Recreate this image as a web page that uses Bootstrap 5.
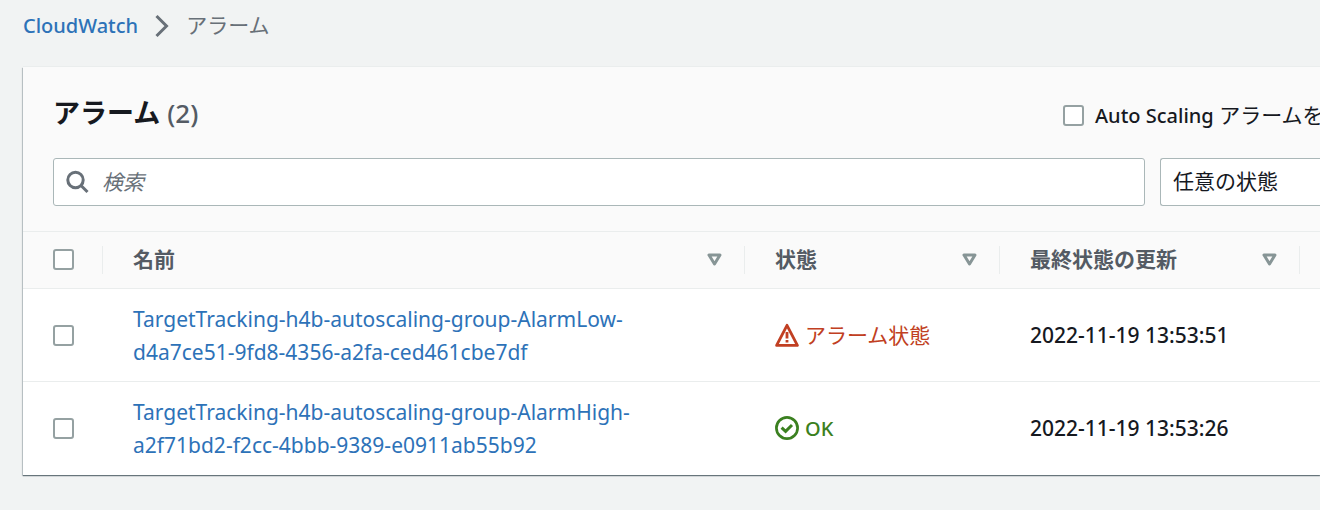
<!DOCTYPE html>
<html lang="ja">
<head>
<meta charset="utf-8">
<meta name="viewport" content="width=device-width, initial-scale=1">
<title>CloudWatch アラーム</title>
<link href="https://cdn.jsdelivr.net/npm/bootstrap@5.3.0/dist/css/bootstrap.min.css" rel="stylesheet">
<style>
  body {
    background: #f1f3f3;
    color: #16191f;
    font-family: "Noto Sans", "Noto Sans CJK JP", sans-serif;
    font-size: 21px;
    line-height: 33px;
  }
  a { color: #2d72b8; text-decoration: none; }
  a:hover { text-decoration: underline; }
  .latin { font-size: 20px; font-weight: 500; }
  .page { padding-left: 23px; }
  .crumbs { height: 67px; padding-top: 9px; }
  .crumbs .breadcrumb { gap: 17px; --bs-breadcrumb-font-size: 21px; }
  .crumb-here { color: #687078; }
  .panel {
    background: #fff;
    box-shadow: 0 1px 1px #001c2459, -1px 1px 1px #001c2426, 0 1px 1px #545b6459, 0 -1px 0 #eaeded;
  }
  .panel-top { background: #fafafa; padding: 24px 0 25px 30px; }
  .title-row { height: 43px; margin-bottom: 24px; }
  h1 { font-size: 27px; line-height: 43px; font-weight: 700; margin: 0; }
  .count { color: #545b64; font-size: 26px; font-weight: 500; }
  .scaling-option { width: 257px; gap: 11px; padding-top: 6px; }
  .form-check-input {
    width: 21px; height: 21px; margin: 0; flex: none;
    border: 2px solid #95a1a2; display: block;
    box-shadow: none;
  }
  .form-check-input[type=checkbox] { border-radius: 3px; }
  .filters { gap: 15px; }
  .search-group, .state-select {
    height: 48px; background: #fff; border: 1px solid #aab7b8; border-radius: 3px;
  }
  .search-group { padding-left: 12px; gap: 12px; }
  .search-group input { font-size: 21px; color: inherit; }
  .search-group input::placeholder { color: #687078; font-style: italic; opacity: 1; }
  .state-select {
    width: 160px; border-right: 0; border-radius: 3px 0 0 3px;
    appearance: none; padding: 0 12px 2px; font-size: 21px; color: inherit;
  }
  .alarm-table { width: 100%; table-layout: fixed; }
  .alarm-table tr { border-top: 1px solid #eaeded; }
  .alarm-table thead { background: #fafafa; color: #545b64; }
  .alarm-table th { height: 57px; padding: 0; font-weight: 700; }
  .alarm-table td { height: 93px; padding: 13px 0 13px 30px; }
  .alarm-table td.alarm-name { padding: 14px 30px 12px; }
  .alarm-table th.pick { padding-left: 30px; }
  .head-cell { height: 28px; border-right: 1px solid #eaeded; padding: 0 22px 2px 30px; }
  .pick .head-cell { padding: 0 0 2px; }
  .sort-btn { line-height: 0; }
  .col-pick { width: 80px; }
  .col-state { width: 255px; }
  .col-time { width: 300px; }
  .col-rest { width: 20px; }
  .state { gap: 6px; }
  .state-alarm { color: #c13f22; }
  .state-ok { color: #3b8020; }
  .stamp { font-weight: 500; }
</style>
</head>
<body>
<main class="page overflow-hidden pb-4">
  <nav class="crumbs" aria-label="breadcrumb">
    <ol class="breadcrumb align-items-center mb-0">
      <li><a class="latin" href="#">CloudWatch</a></li>
      <li class="d-flex" aria-hidden="true">
        <svg width="14" height="24" viewBox="0 0 14 24" fill="none" stroke="#687078" stroke-width="3"><path d="M1.5 2 11.5 12 1.5 22"/></svg>
      </li>
      <li class="crumb-here" aria-current="page">アラーム</li>
    </ol>
  </nav>

  <section class="panel">
    <div class="panel-top">
      <div class="title-row d-flex justify-content-between">
        <h1>アラーム <span class="count">(2)</span></h1>
        <div class="scaling-option d-flex align-items-center text-nowrap">
          <input class="form-check-input" type="checkbox" id="hideScaling">
          <label for="hideScaling"><span class="latin">Auto Scaling</span> アラームを</label>
        </div>
      </div>
      <div class="filters d-flex">
        <div class="search-group d-flex align-items-center flex-grow-1">
          <svg width="24" height="24" viewBox="0 0 24 24" fill="none" stroke="#687078" stroke-width="3"><circle cx="9.5" cy="10" r="7.7"/><path d="M15 15.5 21.5 22"/></svg>
          <input class="border-0 bg-transparent p-0 flex-grow-1" type="search" placeholder="検索" aria-label="検索">
        </div>
        <select class="state-select" aria-label="状態"><option>任意の状態</option></select>
      </div>
    </div>

    <table class="alarm-table">
      <colgroup><col class="col-pick"><col><col class="col-state"><col class="col-time"><col class="col-rest"></colgroup>
      <thead>
        <tr>
          <th class="pick"><div class="head-cell d-flex align-items-center"><input class="form-check-input" type="checkbox" aria-label="すべて選択"></div></th>
          <th><div class="head-cell d-flex align-items-center justify-content-between">名前
            <button class="sort-btn btn p-0 border-0" aria-label="名前で並べ替え"><svg width="15" height="13" viewBox="0 0 15 13" fill="none" stroke="#879596" stroke-width="3" stroke-linejoin="round"><path d="M2 2h11L7.5 11z"/></svg></button></div></th>
          <th><div class="head-cell d-flex align-items-center justify-content-between">状態
            <button class="sort-btn btn p-0 border-0" aria-label="状態で並べ替え"><svg width="15" height="13" viewBox="0 0 15 13" fill="none" stroke="#879596" stroke-width="3" stroke-linejoin="round"><path d="M2 2h11L7.5 11z"/></svg></button></div></th>
          <th><div class="head-cell d-flex align-items-center justify-content-between">最終状態の更新
            <button class="sort-btn btn p-0 border-0" aria-label="更新で並べ替え"><svg width="15" height="13" viewBox="0 0 15 13" fill="none" stroke="#879596" stroke-width="3" stroke-linejoin="round"><path d="M2 2h11L7.5 11z"/></svg></button></div></th>
          <th></th>
        </tr>
      </thead>
      <tbody>
        <tr>
          <td class="pick"><input class="form-check-input" type="checkbox" aria-label="AlarmLow を選択"></td>
          <td class="alarm-name"><a href="#">TargetTracking-h4b-autoscaling-group-AlarmLow-<br>d4a7ce51-9fd8-4356-a2fa-ced461cbe7df</a></td>
          <td><div class="state state-alarm d-flex align-items-center">
            <svg width="24" height="24" viewBox="0 0 24 24" fill="none" stroke="currentColor" stroke-width="2.8" stroke-linejoin="round"><path d="M12 2.3 22.4 22.4H1.6z"/><path d="M12 9v6.5M12 17v2.6" stroke-width="2.8"/></svg>アラーム状態</div></td>
          <td class="stamp">2022-11-19 13:53:51</td>
          <td class="p-0"></td>
        </tr>
        <tr>
          <td class="pick"><input class="form-check-input" type="checkbox" aria-label="AlarmHigh を選択"></td>
          <td class="alarm-name"><a href="#">TargetTracking-h4b-autoscaling-group-AlarmHigh-<br>a2f71bd2-f2cc-4bbb-9389-e0911ab55b92</a></td>
          <td><div class="state state-ok d-flex align-items-center">
            <svg width="24" height="24" viewBox="0 0 24 24" fill="none" stroke="currentColor" stroke-width="2.7"><circle cx="12" cy="12" r="10.6"/><path d="M6.6 11.6 10.6 15.4 17 9" stroke-width="3"/></svg><span class="latin">OK</span></div></td>
          <td class="stamp">2022-11-19 13:53:26</td>
          <td class="p-0"></td>
        </tr>
      </tbody>
    </table>
  </section>
</main>
<script src="https://cdn.jsdelivr.net/npm/bootstrap@5.3.0/dist/js/bootstrap.bundle.min.js"></script>
</body>
</html>
